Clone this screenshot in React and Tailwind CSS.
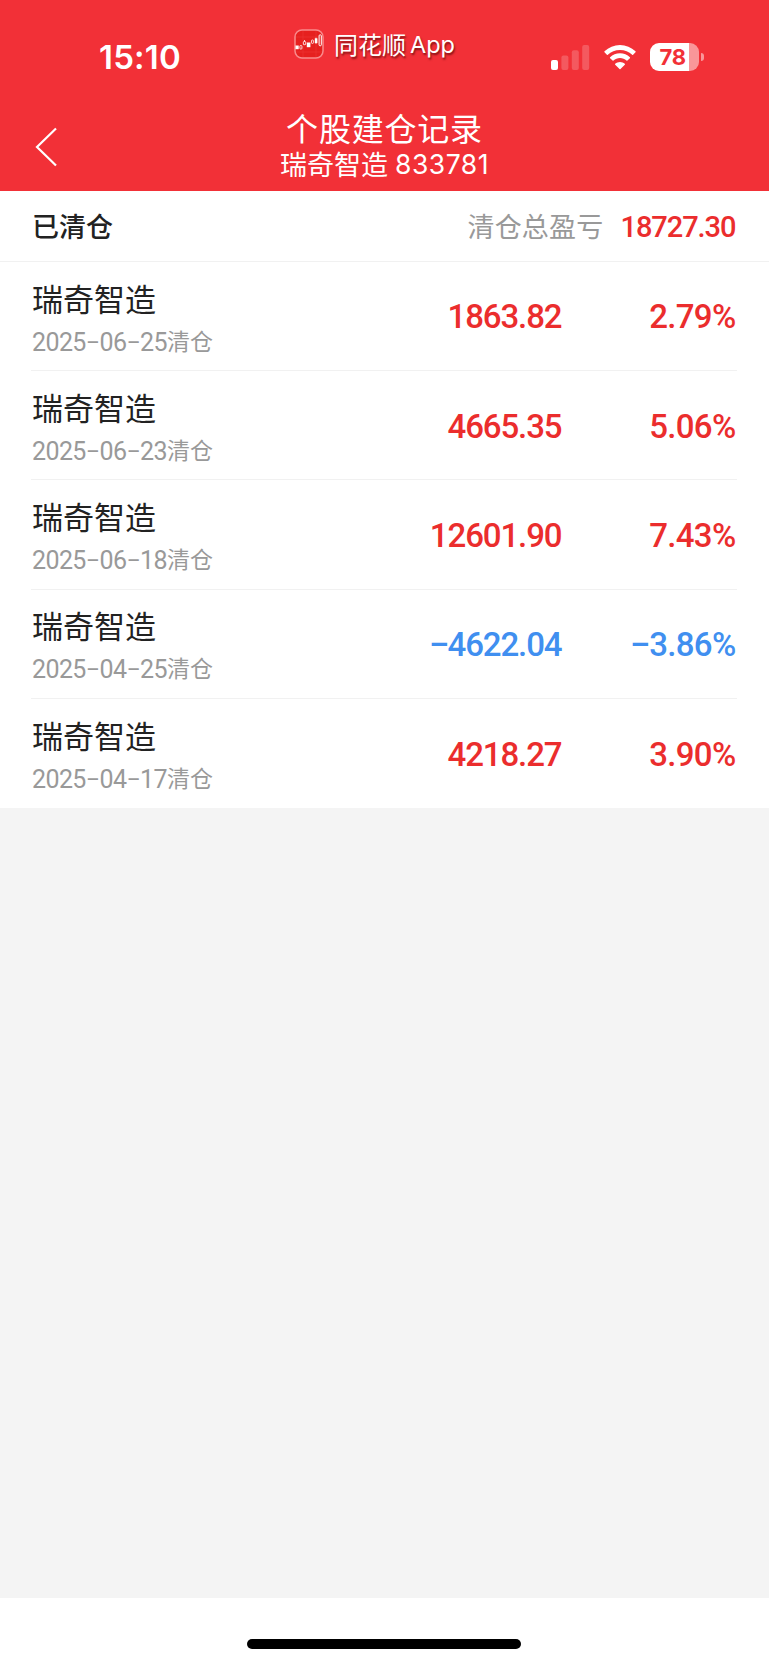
const records = [
  { date: '2025−06−25', profit: '1863.82', rate: '2.79%' },
  { date: '2025−06−23', profit: '4665.35', rate: '5.06%' },
  { date: '2025−06−18', profit: '12601.90', rate: '7.43%' },
  { date: '2025−04−25', profit: '−4622.04', rate: '−3.86%' },
  { date: '2025−04−17', profit: '4218.27', rate: '3.90%' },
];

function AppLogo() {
  return (
    <svg width="30" height="30" viewBox="0 0 30 30" fill="none">
      <rect x="1" y="1" width="28" height="28" rx="7" fill="#e6201f" stroke="#f98a8c" strokeWidth="1.5" />
      <path d="M2 8H28M2 23H28M9 2V28M22 2V28" stroke="#ef3a3a" strokeWidth=".5" />
      <rect x="1.5" y="16.5" width="3.2" height="3.7" fill="#fff" />
      <rect x="5.9" y="16.5" width="2" height="3.6" rx=".8" stroke="#fff" strokeWidth=".8" />
      <path d="M10.5 11.2V12.4" stroke="#fff" />
      <rect x="9.4" y="12.5" width="2.3" height="3.2" rx=".7" stroke="#fff" strokeWidth=".8" />
      <rect x="12.8" y="13.5" width="3.6" height="4.7" fill="#fff" />
      <rect x="17.5" y="11" width="1.9" height="3.4" rx=".7" stroke="#fff" strokeWidth=".8" />
      <rect x="20.8" y="9.3" width="2.6" height="4.8" fill="#fff" />
      <path d="M22 8.5V15" stroke="#fff" strokeWidth=".6" />
      <rect x="25.1" y="5.8" width="2.2" height="11" rx="1" stroke="#fff" fill="#e6201f" />
    </svg>
  );
}

function Signal() {
  return (
    <svg width="39" height="25" viewBox="0 0 39 25" fill="#fff">
      <rect x="0" y="15" width="7" height="10" rx="2" />
      <rect x="10.4" y="10.5" width="7" height="14.5" rx="2" opacity=".2" />
      <rect x="20.8" y="5.2" width="7" height="19.8" rx="2" opacity=".2" />
      <rect x="31.2" y="0" width="7" height="25" rx="2" opacity=".2" />
    </svg>
  );
}

function Wifi() {
  return (
    <svg width="34" height="25" viewBox="0 0 34 25" fill="#fff">
      <path d="M17 4.9c4.7 0 9 1.8 12.2 4.8.3.3.7.3.9 0l2.4-2.4c.3-.3.3-.7 0-1C28.3 2.3 22.9 0 17 0S5.7 2.3 1.5 6.3c-.3.3-.3.7 0 1l2.4 2.4c.2.3.6.3.9 0C8 6.7 12.3 4.9 17 4.9z" />
      <path d="M17 13.1c2.500 0 4.800.9 6.500 2.500.3.3.7.3.9 0l2.500-2.400c.3-.3.3-.7 0-1C24.300 9.700 20.800 8.200 17 8.200s-7.300 1.500-9.900 4c-.3.3-.3.7 0 1l2.500 2.400c.2.3.6.3.9 0 1.700-1.600 4-2.500 6.500-2.500z" />
      <path d="M21.8 18.500c.3-.3.3-.7 0-1-1.300-1.100-3-1.800-4.800-1.800s-3.500.7-4.800 1.800c-.3.3-.3.7 0 1l4.300 4.300c.3.3.7.3 1 0z" transform="translate(0 1.200)" />
    </svg>
  );
}

function Battery() {
  return (
    <div className="flex items-center">
      <div className="flex h-7 w-[49px] items-center overflow-hidden rounded-[9px] bg-[linear-gradient(90deg,#fff_0_39px,#f99699_39px)] pl-[9.5px] font-[Inter] text-[22px] font-bold leading-none tracking-[-0.3px] text-[#f23037]">
        78
      </div>
      <div className="ml-[2px] h-2 w-[3px] rounded-r-full bg-[#f99699]" />
    </div>
  );
}

function Amount({ value, className }) {
  const negative = value.startsWith('−');
  return (
    <div className={'flex justify-end font-[Roboto] text-[33px] font-medium ' + className}>
      {negative && <span className="inline-block scale-x-112">−</span>}
      <span>{negative ? value.slice(1) : value}</span>
    </div>
  );
}

export default function App() {
  return (
    <div className="flex h-[1665px] w-[769px] flex-col bg-[#f4f4f4] font-['Noto_Sans_CJK_SC',sans-serif]">
      <header className="h-[191px] bg-[#f23037] text-white">
        <div className="grid h-[110px] grid-cols-[294px_1fr_218px] items-start">
          <div className="pt-[41px] pl-[99px] font-[Inter] text-[33px] font-semibold leading-8 tracking-[0.2px]">15:10</div>
          <div className="flex items-center gap-[10px] pt-[28px] leading-[30px] [text-shadow:1px_2px_2px_rgba(70,0,0,0.65)]">
            <AppLogo />
            <div className="flex items-center gap-[4px]">
              <span className="text-[24px]">同花顺</span>
              <span className="pt-[2px] font-[Inter] text-[23.5px]">App</span>
            </div>
          </div>
          <div className="flex items-center pt-[43px]">
            <div className="flex items-center gap-[13px]">
              <Signal />
              <Wifi />
            </div>
            <div className="ml-[13px]">
              <Battery />
            </div>
          </div>
        </div>
        <div className="grid grid-cols-[120px_1fr_120px]">
          <svg className="mt-[17px] ml-[35px]" width="23" height="40" viewBox="0 0 23 40" fill="none" stroke="#fff" strokeWidth="2.2">
            <path d="M21 1.5L2 20L21 38.5" />
          </svg>
          <div className="flex flex-col items-center">
            <h1 className="h-[35px] text-[32px] leading-[34px] tracking-[0.8px] whitespace-nowrap">个股建仓记录</h1>
            <div className="flex h-[36px] items-center gap-[7px] leading-[36px]">
              <span className="pt-px text-[27px]">瑞奇智造</span>
              <span className="pt-px font-[Inter] text-[26.5px] tracking-[0.5px]">833781</span>
            </div>
          </div>
        </div>
      </header>

      <section className="bg-white">
        <div className="flex h-[71px] items-center justify-between border-b border-[#f1f1f1] pr-[33.5px] pl-8">
          <h2 className="pt-px text-[27px] font-medium text-[#222]">已清仓</h2>
          <div className="flex items-center gap-[17px] pt-px">
            <span className="text-[27px] tracking-[0.2px] text-[#999]">清仓总盈亏</span>
            <span className="pt-[3px] font-[Roboto] text-[29px] font-medium tracking-[-1.05px] text-[#eb2d2d]">18727.30</span>
          </div>
        </div>
        <ul className="grid h-[546px] grid-rows-5 px-8">
          {records.map((r) => (
            <li
              key={r.date}
              className={
                (r.rate.startsWith('−') ? 'text-[#408ff0]' : 'text-[#eb2d2d]') +
                ' -ml-px grid grid-cols-[1fr_250px_174px] items-center border-b border-[#f1f1f1] pr-[1.5px] pl-px last:border-0'
              }
            >
              <div className="pt-[8px]">
                <div className="text-[31px] leading-10 text-[#222]">瑞奇智造</div>
                <div className="mt-[2px] flex text-[23px] leading-10 text-[#999]">
                  <span className="pt-[3px] font-[Roboto] text-[25px] tracking-[-0.6px]">{r.date}</span>
                  <span>清仓</span>
                </div>
              </div>
              <Amount value={r.profit} className="pt-[2px] tracking-[-1.1px]" />
              <Amount value={r.rate} className="pt-[2px] tracking-[-0.7px]" />
            </li>
          ))}
        </ul>
      </section>

      <footer className="mt-auto flex h-[67px] justify-center bg-white pt-[41px]">
        <div className="mr-px h-[10px] w-[274px] rounded-full bg-black" />
      </footer>
    </div>
  );
}
